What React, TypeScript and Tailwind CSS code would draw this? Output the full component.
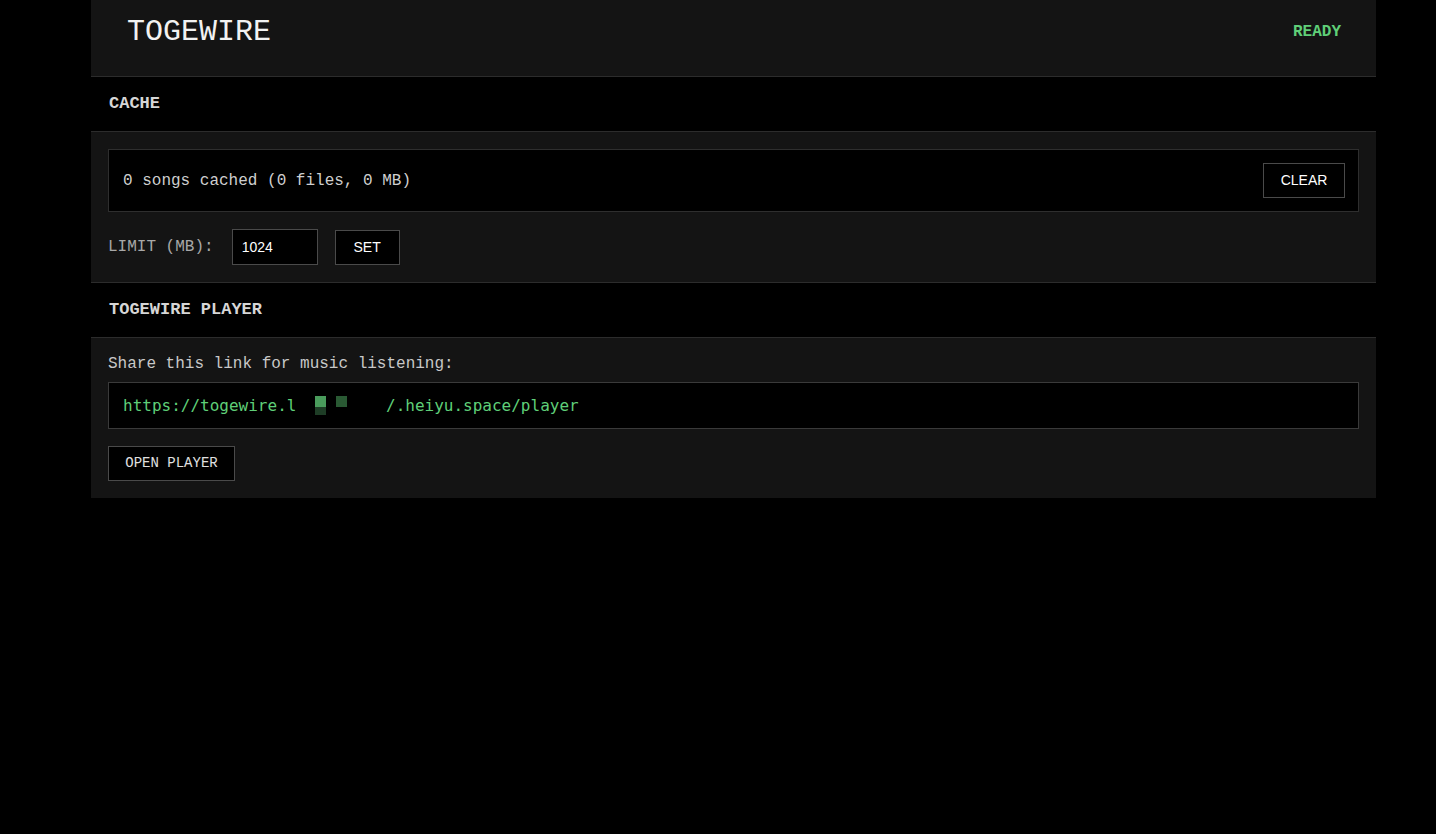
import React from "react";

const mono = "font-['Courier_New','Courier','Nimbus_Mono_PS','FreeMono','Liberation_Mono',monospace]";
const sans = "font-['Liberation_Sans',Arial,sans-serif]";
const code = "font-['DejaVu_Sans_Mono',Menlo,monospace]";

export default function App() {
  return (
    <div className="min-h-screen bg-black text-[#e0e0e0]">
      <div className="mx-[91px] w-[1285px]">
        {/* header */}
        <header className="flex h-[77px] items-start justify-between border-b border-[#2c2c2c] bg-[#141414] pl-9 pr-[35px] pt-[15px]">
          <h1 className={`${mono} text-[30px] leading-[34px] text-[#f2f2f2]`}>TOGEWIRE</h1>
          <span className={`${mono} mt-[7px] text-[16px] font-bold leading-[20px] text-[#5fcf78]`}>READY</span>
        </header>

        {/* cache */}
        <div className="flex h-[55px] items-center border-b border-[#2c2c2c] px-[18px]">
          <h2 className={`${mono} text-[17px] font-bold text-[#d6d6d6]`}>CACHE</h2>
        </div>
        <section className="border-b border-[#2c2c2c] bg-[#141414] px-[17px] py-[17px]">
          <div className="flex h-[63px] items-center justify-between border border-[#2e2e2e] bg-black pl-[14px] pr-[13px]">
            <span className={`${mono} text-[16px] text-[#cfcfcf]`}>0 songs cached (0 files, 0 MB)</span>
            <button className={`${sans} h-[35px] w-[82px] border border-[#4a4a4a] bg-black text-[14px] text-white`}>
              CLEAR
            </button>
          </div>
          <div className="mt-[17px] flex items-center">
            <span className={`${mono} text-[16px] text-[#a8a8a8]`}>LIMIT (MB):</span>
            <input
              defaultValue="1024"
              className={`${sans} ml-[18px] h-[36px] w-[86px] border border-[#4a4a4a] bg-black px-[9px] text-[14px] text-white outline-none`}
            />
            <button className={`${sans} ml-[17px] h-[35px] w-[65px] border border-[#4a4a4a] bg-black text-[14px] text-white`}>
              SET
            </button>
          </div>
        </section>

        {/* player */}
        <div className="flex h-[55px] items-center border-b border-[#2c2c2c] px-[18px]">
          <h2 className={`${mono} text-[17px] font-bold text-[#d6d6d6]`}>TOGEWIRE PLAYER</h2>
        </div>
        <section className="bg-[#141414] px-[17px] py-[17px]">
          <p className={`${mono} text-[16px] leading-[18px] text-[#c8c8c8]`}>Share this link for music listening:</p>
          <div className="mt-[9px] flex h-[47px] items-center border border-[#3a3a3a] bg-black pl-[14px]">
            <span className={`${code} w-[178px] text-[16px] text-[#5fcf78]`}>https://togewire.l</span>
            <span className="relative ml-[14px] inline-block h-[19px] w-[40px]">
              <span className="absolute left-0 top-0 h-[11px] w-[11px] bg-[#4a9c5c]" />
              <span className="absolute left-0 top-[11px] h-[8px] w-[11px] bg-[#1e3d26]" />
              <span className="absolute left-[21px] top-0 h-[11px] w-[11px] bg-[#2a5a34]" />
            </span>
            <span className={`${code} ml-[31px] text-[16px] text-[#5fcf78]`}>/.heiyu.space/player</span>
          </div>
          <button className={`${mono} mt-[17px] h-[35px] w-[127px] border border-[#4a4a4a] bg-black text-[14px] text-[#e0e0e0]`}>
            OPEN PLAYER
          </button>
        </section>
      </div>
    </div>
  );
}
